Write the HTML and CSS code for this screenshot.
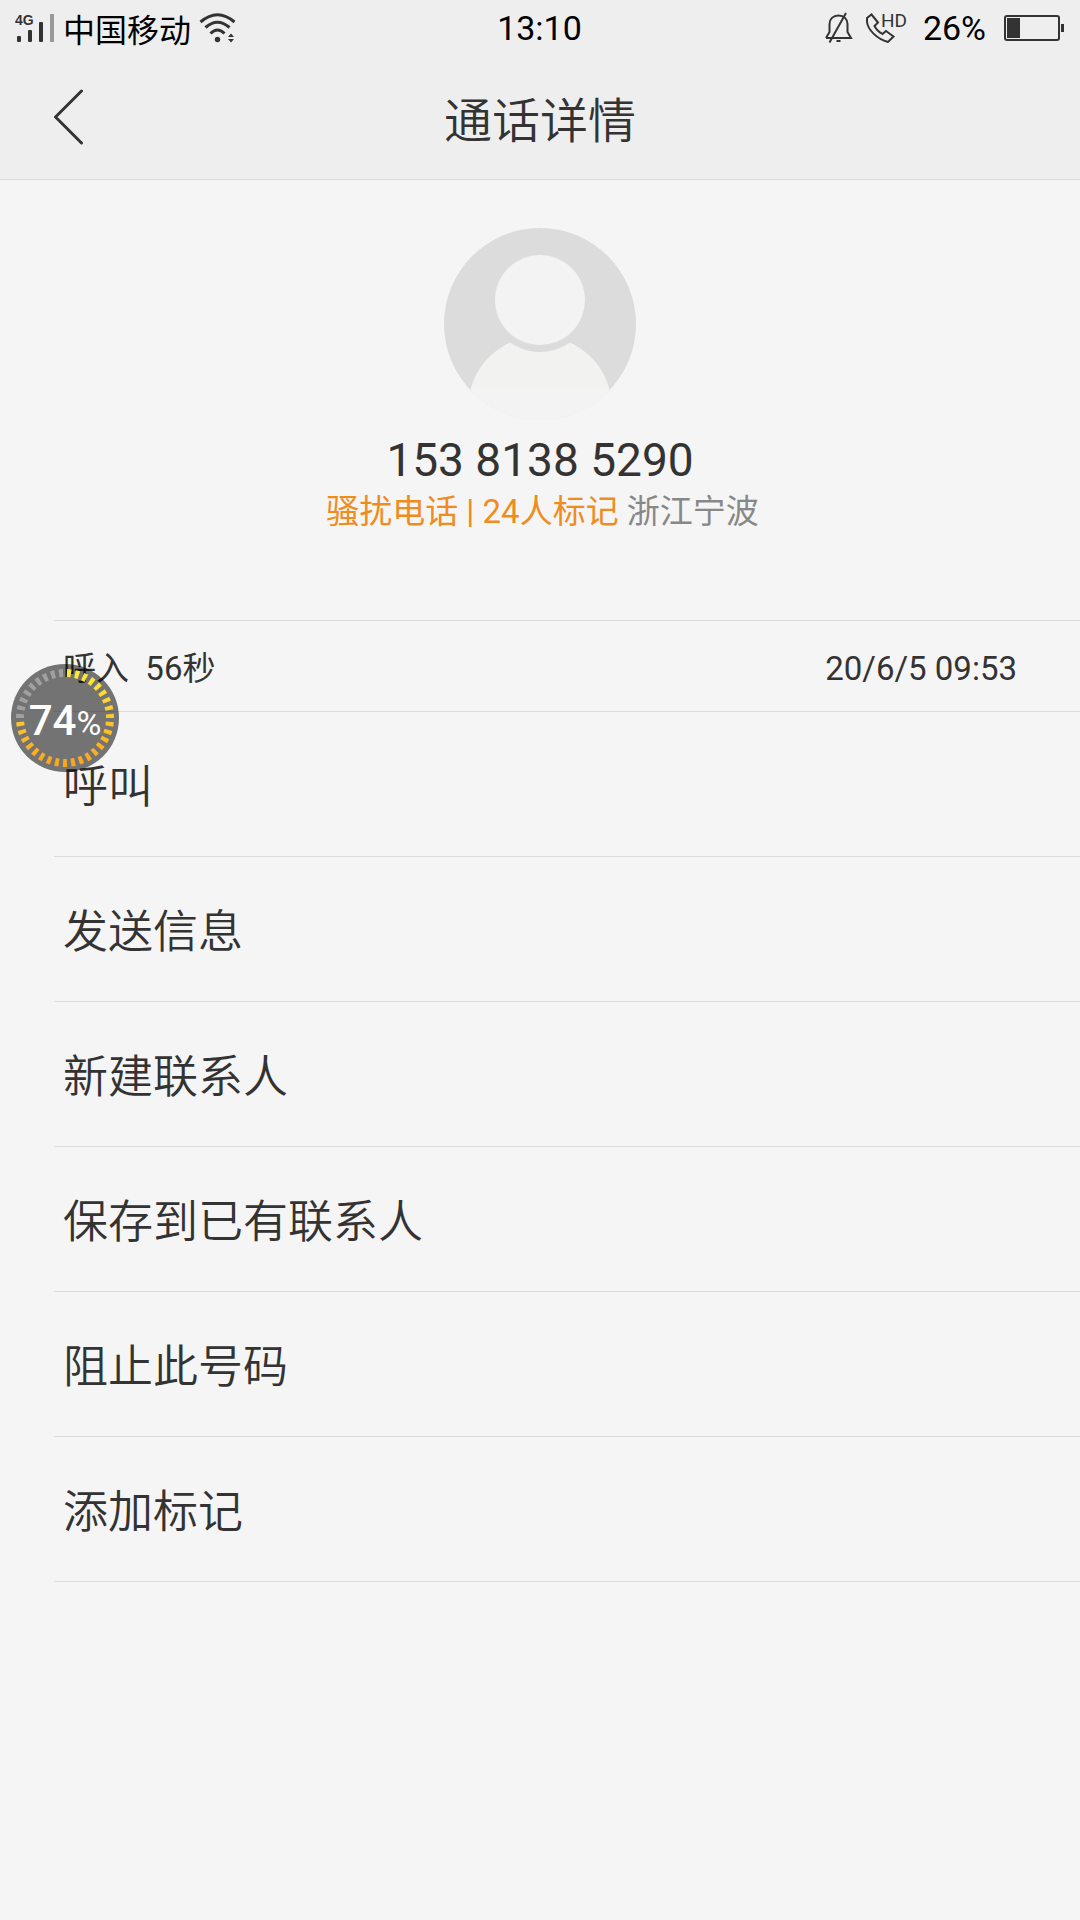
FILE: index.html
```html
<!DOCTYPE html>
<html lang="zh-CN">
<head>
  <meta charset="UTF-8">
  <meta name="viewport" content="width=device-width, initial-scale=1">
  <title>通话详情</title>
  <link rel="stylesheet" href="styles.css">
</head>
<body>
  <header class="topo">
    <div class="status">
      <div class="status-left">
        <svg class="signal" width="40" height="30" viewBox="0 0 40 30" aria-hidden="true">
          <text x="0" y="12">4G</text>
          <rect x="2" y="23" width="4" height="6" rx="1"/>
          <rect x="13" y="17" width="4" height="12" rx="1"/>
          <rect x="24" y="9" width="4" height="20" rx="1"/>
          <rect class="off" x="35" y="1" width="4" height="28"/>
        </svg>
        <span class="carrier">中国移动</span>
        <svg class="wifi" width="38" height="30" viewBox="0 0 38 30" aria-hidden="true">
          <path class="line" d="M1.500 9Q18.500-5.500 35.500 9M6.500 14.500Q18.500 4 30.500 14.500M11.500 20.500Q18.500 13.500 25.500 20.500"/>
          <circle cx="18.500" cy="26.500" r="2.700"/>
          <path d="M29 24L32 20.500L35 24ZM29 26L32 29.500L35 26Z"/>
        </svg>
      </div>
      <time>13:10</time>
      <div class="status-right">
        <svg class="bell" width="30" height="32" viewBox="0 0 30 32" aria-hidden="true">
          <path class="line" d="M2 26H27L23.500 20V12C23.500 7 20 3.500 14.500 3.500S5.500 7 5.500 12V20L2 26M5.500 30.500L22 1"/>
          <path d="M12.500 28H16.500V30H12.500Z"/>
        </svg>
        <svg class="phone" width="48" height="40" viewBox="0 -4 48 40" aria-hidden="true">
          <path class="line" d="M2 6L6.500 2.500L13 10.500L9.500 14C11 17 14 20 17.500 22L21 19L28.500 24.500L23 30C12 27 3 18 2 10Z"/>
          <text x="16" y="15">HD</text>
        </svg>
        <span class="percent">26%</span>
        <svg class="battery" width="60" height="26" viewBox="0 0 60 26" aria-hidden="true">
          <rect class="line" x="1" y="1" width="54" height="24" rx="2"/>
          <rect x="3" y="3" width="13" height="20"/>
          <rect x="57" y="9" width="3" height="8"/>
        </svg>
      </div>
    </div>
    <nav class="nav">
      <button class="back" type="button" aria-label="返回">
        <svg width="30" height="56" viewBox="0 0 30 56"><path d="M27.500 2L1.500 28L27.500 54"/></svg>
      </button>
      <h1>通话详情</h1>
    </nav>
  </header>

  <main>
    <section class="contact">
      <svg class="avatar" width="192" height="192" viewBox="0 0 192 192" aria-hidden="true">
        <clipPath id="round"><circle cx="96" cy="96" r="96"/></clipPath>
        <g clip-path="url(#round)">
          <rect width="192" height="192" fill="#dcdcdc"/>
          <circle cx="96" cy="180" r="72" fill="#f2f2f1"/>
          <rect y="162" width="192" height="30" fill="#f3f3f3"/>
          <circle cx="96" cy="72" r="52" fill="#dcdcdc"/>
          <circle cx="96" cy="72" r="45" fill="#f3f3f3"/>
        </g>
      </svg>
      <h2>153 8138 5290</h2>
      <p><span class="tag">骚扰电话 | 24人标记</span> 浙江宁波</p>
    </section>

    <div class="list">
      <div class="record">
        <span>呼入&nbsp; 56秒</span>
        <time>20/6/5 09:53</time>
      </div>
      <button type="button">呼叫</button>
      <button type="button">发送信息</button>
      <button type="button">新建联系人</button>
      <button type="button">保存到已有联系人</button>
      <button type="button">阻止此号码</button>
      <button type="button">添加标记</button>
    </div>
  </main>

  <div class="meter">
    <svg width="108" height="108" viewBox="0 0 108 108" aria-hidden="true">
      <linearGradient id="fire" gradientUnits="userSpaceOnUse" x1="0" y1="5" x2="0" y2="103">
        <stop offset="0" stop-color="#ffeb3b"/>
        <stop offset="0.500" stop-color="#fcc82d"/>
        <stop offset="1" stop-color="#faa21e"/>
      </linearGradient>
      <!-- 35 ticks, 26 of them on -->
      <path class="ticks on" pathLength="260" d="M54 9A45 45 0 1 1 9.050 56"/>
      <path class="ticks" pathLength="90" d="M9.050 56A45 45 0 0 1 54 9"/>
    </svg>
    <div class="value">74<small>%</small></div>
  </div>
</body>
</html>
```
FILE: styles.css
```css
:root {
  --bg: #f5f5f5;
  --bar: #eeeeee;
  --text: #333;
  --line: #dcdcdc;
  --orange: #f08c1e;
}
* {
  box-sizing: border-box;
}
body {
  font-family: Roboto, "Noto Sans CJK SC", sans-serif;
  background: var(--bg);
  color: var(--text);
  margin: 0;
  min-height: 100vh;
  position: relative;
}
.topo {
  background: var(--bar);
  border-bottom: 1px solid var(--line);
}
.status {
  display: grid;
  grid-template-columns: 1fr auto 1fr;
  align-items: center;
  height: 56px;
  padding: 0 16px 0 15px;
  color: #000;
  font-size: 34px;
}
.status-left, .status-right {
  display: flex;
  align-items: center;
}
.status-right {
  justify-content: flex-end;
}
.status svg {
  fill: var(--text);
}
.status .line {
  fill: none;
  stroke: var(--text);
  stroke-width: 2;
}
.status .wifi .line {
  stroke-width: 3;
}
.signal text {
  font: bold 14px "Liberation Sans", sans-serif;
}
.signal .off {
  fill: #999;
}
.carrier {
  font-size: 32px;
  margin: 0 8px;
}
.phone {
  margin: 0 10px 0 11px;
}
.phone text {
  font-size: 19px;
}
.battery {
  margin-left: 18px;
}
.nav {
  display: grid;
  grid-template-columns: 1fr auto 1fr;
  align-items: center;
  height: 123px;
  padding: 0 54px 2px;
}
.back {
  justify-self: start;
  display: flex;
  padding: 0;
  border: none;
  background: none;
  cursor: pointer;
}
.back path {
  fill: none;
  stroke: var(--text);
  stroke-width: 3;
  stroke-linecap: round;
}
h1 {
  margin: 0;
  font-size: 48px;
  font-weight: 350;
}
.contact {
  display: flex;
  flex-direction: column;
  align-items: center;
  padding: 48px 24px 84px;
}
h2 {
  margin: 12px 0 0;
  font-size: 46px;
  line-height: 56px;
  font-weight: normal;
}
.contact p {
  margin: 0;
  padding-left: 5px;
  font-size: 33px;
  line-height: 48px;
  color: #888;
}
.tag {
  color: var(--orange);
}
.list {
  margin-left: 54px;
  border-top: 1px solid var(--line);
}
.record {
  display: flex;
  justify-content: space-between;
  align-items: baseline;
  height: 91px;
  padding: 24px 63px 0 9px;
  font-size: 33px;
  line-height: 48px;
  border-bottom: 1px solid var(--line);
}
.list button {
  display: block;
  width: 100%;
  height: 145px;
  padding: 0 9px 2px;
  border: none;
  border-bottom: 1px solid var(--line);
  background: none;
  color: inherit;
  font: inherit;
  font-size: 45px;
  font-weight: 350;
  text-align: left;
  cursor: pointer;
}
/* floating memory ball */
.meter {
  position: absolute;
  left: 11px;
  top: 664px;
  width: 108px;
  height: 108px;
  border-radius: 50%;
  background: rgba(0, 0, 0, 0.53);
  color: #fff;
  display: grid;
  place-items: center;
}
.meter svg, .value {
  grid-area: 1 / 1;
}
.value {
  padding-top: 8px;
  font-size: 42px;
  font-weight: 500;
  line-height: 48px;
}
.value small {
  font-size: 34px;
  font-weight: 400;
}
.ticks {
  fill: none;
  stroke: #a0a0a0;
  stroke-width: 8;
  stroke-dasharray: 5 5;
  stroke-dashoffset: -2.5;
}
.ticks.on {
  stroke: url(#fire);
}
```
